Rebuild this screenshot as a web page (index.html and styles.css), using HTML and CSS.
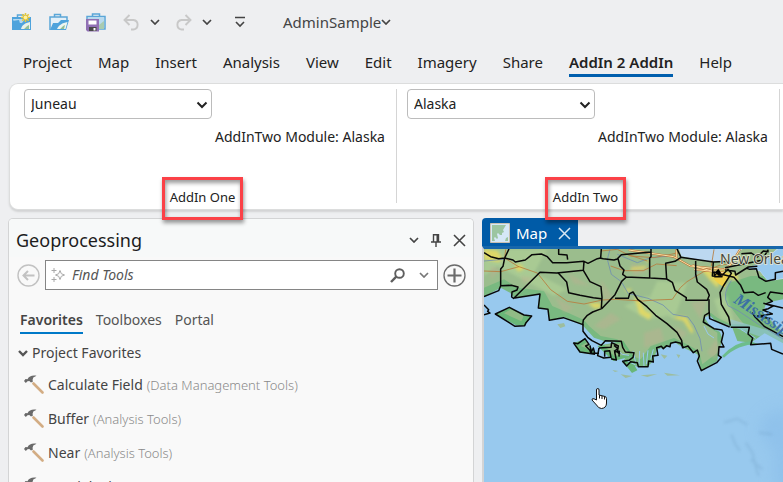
FILE: index.html
```html
<!DOCTYPE html>
<html lang="en">
<head>
<meta charset="utf-8">
<title>AdminSample</title>
<link rel="stylesheet" href="styles.css">
</head>
<body>
<svg class="defs" aria-hidden="true">
  <symbol id="chev" viewBox="0 0 10 6"><path d="M1 1l4 4 4-4" fill="none" stroke="currentColor" stroke-width="1.7"/></symbol>
  <symbol id="hammer" viewBox="0 0 20 20"><path d="M9.500 8.500l9 9" stroke="#d3ad84" stroke-width="2.600" stroke-linecap="round" fill="none"/><path d="M0 6l1.500-2 2 .2C5 1.500 8 0 12.500.8L9.300 2.600 8.500 5 9 6.500 7 7.500 5.300 6 3.500 6.300 1.800 8z" fill="#6a6a6a"/></symbol>
</svg>
<div class="app">
  <header class="quick">
    <button aria-label="New project"><svg width="20" height="18" viewBox="0 0 20 18"><path d="M5.500 4V2h6v2" fill="none" stroke="#5aa6d8" stroke-width="1.500"/><path d="M0 4h19v13H0z" fill="#4ea3dc"/><path d="M1 6h12l-3 4H2z" fill="#b5d9f0"/><path d="M0 8l7-1 3 10H0z" fill="#4ea3dc"/><path d="M9 16c1-4 4-6 9-7v7z" fill="#e8f2ea"/><path d="M12 16c2-1 2-3 5-4v4z" fill="#92bf96"/><path d="M13.500 0v9M9 4.500h9M10.300 1.300l6.400 6.400M16.700 1.300l-6.400 6.400" stroke="#e2c63f" stroke-width="1.600"/><circle cx="13.500" cy="4.500" r="2.300" fill="#fff2a0" stroke="#e2c63f"/></svg></button>
    <button aria-label="Open project"><svg width="20" height="18" viewBox="0 0 20 18"><path d="M5.500 4V1.500h6V4M1 17V4h17v5" fill="none" stroke="#5aa6d8" stroke-width="1.500"/><path d="M2 5h15v5H2z" fill="#e4f0f8"/><path d="M1 17L4 10h5l3-3h8l-3 10z" fill="#4ea3dc"/><path d="M8 16c2-4 5-6 10.500-7l-2 7z" fill="#eef5f0"/><path d="M11 16c2-1 2-3 5-4l-1 4z" fill="#92bf96"/></svg></button>
    <button aria-label="Save project"><svg width="20" height="19" viewBox="0 0 20 19"><path d="M6.500 3V1h7v2M1 6V3.500h18V16h-6" fill="none" stroke="#5aa6d8" stroke-width="1.500"/><path d="M2 4h16v12h-5V6H2z" fill="#b9daee"/><path d="M13 12l5-4v8h-5z" fill="#a9cbb0"/><path d="M0 6h13v12.500H1.500L0 17z" fill="#9070b4"/><path d="M2.500 7.500h8v4h-8z" fill="#fff"/><path d="M3 14h7.500v4H3z" fill="#484848"/><path d="M7.500 15h2v2.500h-2z" fill="#fff"/></svg></button>
    <button class="off" aria-label="Undo"><svg width="17" height="17" viewBox="0 0 17 17"><path d="M6.500 1L1.500 6l5 5M2 6h8.500a4.800 4.800 0 0 1 0 9.500H8" fill="none" stroke="currentColor" stroke-width="1.900"/></svg></button>
    <button aria-label="Undo list"><svg width="10" height="6"><use href="#chev"/></svg></button>
    <button class="off redo" aria-label="Redo"><svg width="17" height="17" viewBox="0 0 17 17"><path d="M10.500 1l5 5-5 5M15 6H6.500a4.800 4.800 0 0 0 0 9.500H9" fill="none" stroke="currentColor" stroke-width="1.900"/></svg></button>
    <button aria-label="Redo list"><svg width="10" height="6"><use href="#chev"/></svg></button>
    <button class="custom" aria-label="Customize"><svg width="10" height="12" viewBox="0 0 10 12"><path d="M0 1.500h10M1 6l4 4 4-4" fill="none" stroke="currentColor" stroke-width="1.600"/></svg></button>
    <button class="project">AdminSample<svg width="10" height="6"><use href="#chev"/></svg></button>
  </header>
  <nav class="tabs">
    <a href="#">Project</a><a href="#">Map</a><a href="#">Insert</a><a href="#">Analysis</a><a href="#">View</a><a href="#">Edit</a><a href="#">Imagery</a><a href="#">Share</a><a href="#" class="active">AddIn 2 AddIn</a><a href="#">Help</a>
  </nav>
  <section class="ribbon">
    <div class="group">
      <div class="picker"><select aria-label="City"><option>Juneau</option></select><svg width="12" height="8" viewBox="0 0 12 8"><path d="M1.500 1.500L6 6l4.500-4.500" fill="none" stroke="#222" stroke-width="2"/></svg></div>
      <span class="status">AddInTwo Module: Alaska</span>
      <span class="caption">AddIn One</span>
    </div>
    <div class="group">
      <div class="picker"><select aria-label="State"><option>Alaska</option></select><svg width="12" height="8" viewBox="0 0 12 8"><path d="M1.500 1.500L6 6l4.500-4.500" fill="none" stroke="#222" stroke-width="2"/></svg></div>
      <span class="status">AddInTwo Module: Alaska</span>
      <span class="caption">AddIn Two</span>
    </div>
  </section>
  <main class="work">
    <section class="pane">
      <div class="pane-head">
        <h1>Geoprocessing</h1>
        <button aria-label="Menu"><svg width="10" height="6"><use href="#chev"/></svg></button>
        <button aria-label="Pin"><svg width="10" height="13" viewBox="0 0 10 13"><path d="M2.500 8V.8h5V8M0 8h10M5 8v5" fill="none" stroke="currentColor" stroke-width="1.400"/><path d="M5.500 1h2v7h-2z" fill="currentColor"/></svg></button>
        <button aria-label="Close"><svg width="13" height="13" viewBox="0 0 13 13"><path d="M1 1l11 11M12 1L1 12" stroke="currentColor" stroke-width="1.600"/></svg></button>
      </div>
      <div class="finder">
        <button class="off" aria-label="Back"><svg width="23" height="23" viewBox="0 0 23 23" fill="none" stroke="currentColor"><circle cx="11.500" cy="11.500" r="10.500" stroke-width="1.400"/><path d="M17.500 11.500H6.500M11 7l-4.500 4.500L11 16" stroke-width="2"/></svg></button>
        <div class="field">
          <svg width="14" height="14" viewBox="0 0 14 14" fill="none" stroke="#a8a8a8"><path d="M9 2.500l1.300 3.200L13.500 7l-3.200 1.300L9 11.500 7.700 8.300 4.500 7l3.200-1.300z"/><path d="M3 0v5M.5 2.500h5M3 9v5M.5 11.500h5"/></svg>
          <input type="text" placeholder="Find Tools" aria-label="Find Tools">
          <button aria-label="Search"><svg width="15" height="15" viewBox="0 0 15 15" fill="none" stroke="#5e5e5e"><circle cx="9.500" cy="5.500" r="4.300" stroke-width="1.900"/><path d="M6.300 8.700L1 14" stroke-width="2.400"/></svg></button>
          <button class="more" aria-label="Search history"><svg width="10" height="6"><use href="#chev"/></svg></button>
        </div>
        <button aria-label="Add"><svg width="23" height="23" viewBox="0 0 23 23" fill="none" stroke="#6b6b6b"><circle cx="11.500" cy="11.500" r="10.500" stroke-width="1.300"/><path d="M11.500 4.500v14M4.500 11.500h14" stroke-width="2.200"/></svg></button>
      </div>
      <nav class="subtabs"><a href="#" class="active">Favorites</a><a href="#">Toolboxes</a><a href="#">Portal</a></nav>
      <h2><svg width="10" height="7" viewBox="0 0 10 7"><path d="M1 1l4 4 4-4" fill="none" stroke="#555" stroke-width="2.400"/></svg>Project Favorites</h2>
      <ul class="tools">
        <li><svg width="20" height="20"><use href="#hammer"/></svg>Calculate Field <small>(Data Management Tools)</small></li>
        <li><svg width="20" height="20"><use href="#hammer"/></svg>Buffer <small>(Analysis Tools)</small></li>
        <li><svg width="20" height="20"><use href="#hammer"/></svg>Near <small>(Analysis Tools)</small></li>
        <li><svg width="20" height="20"><use href="#hammer"/></svg>Spatial Join</li>
      </ul>
    </section>
    <section class="view">
      <div class="view-tab">
        <svg width="20" height="20" viewBox="0 0 20 20"><path d="M.5.500h19v19H.5z" fill="#d6e8f7" stroke="#c9c1b1"/><path d="M2 2h14l-3 5 1 2-2 1 0 2-2 0-2-2-1 1 1 4-1 1-2-2-1 1 1 3H2z" fill="#9cc5a1"/><path d="M15 18l1-3 2-1v4z" fill="#9cc5a1"/></svg>
        <span>Map</span>
        <button aria-label="Close map"><svg width="13" height="13" viewBox="0 0 13 13"><path d="M1 1l11 11M12 1L1 12" stroke="#d9e7f3" stroke-width="1.500"/></svg></button>
      </div>
      <div class="canvas">
        <svg class="map" viewBox="0 9 897 699" preserveAspectRatio="xMinYMin slice">
          <defs>
            <filter id="soft" x="-50%" y="-50%" width="200%" height="200%"><feGaussianBlur stdDeviation="5"/></filter>
            <filter id="wide" x="-50%" y="-50%" width="200%" height="200%"><feGaussianBlur stdDeviation="22"/></filter>
          </defs>
          <path d="M0 0H900V710H0z" fill="#98c9ee"/>
          <path d="M910 480c-80 30-110 60-60 110s0 60 30 140h60z" fill="#86bae8" opacity=".5" filter="url(#wide)"/>
          <g fill="none" stroke="#709fc4" stroke-width="7" opacity=".3" filter="url(#soft)"><path d="M720 530l40-12 30 18M742 565l12 30 14 20M785 590l20 30 18 70M825 560l40 5M800 640l35 30"/></g>
          <path d="M0 0H897V292L842 262 800 290 760 285 745 245 720 250 718 300 705 302 700 345 652 375 640 325 600 306 570 288 545 305 520 310 506 345 492 362 462 362 415 350 430 325 400 290 360 285 330 275 296 238 240 213 197 223 192 190 163 187 165 145 92 157 78 140 50 125 0 152z" fill="#79b980"/>
          <path d="M0 0H897V90L800 90 770 100 735 110 722 160 760 210 780 235 740 235 700 215 680 200 665 215 655 230 700 260 700 320 655 355 645 315 600 290 570 276 500 300 470 340 445 330 400 280 350 270 315 240 300 222 240 195 205 180 180 135 100 125 60 100 0 125z" fill="#9bbd8d"/>
          <g filter="url(#soft)" fill="#badb9b" opacity=".45"><path d="M0 10h190l-40 70 100 50-40 20L40 60 0 90zM520 105l90 5-40 110-80-50zM420 180l70-30 60 60-60 10zM690 160l40-10 20 80-40-10z"/></g>
          <g filter="url(#soft)" fill="#c0af92" opacity=".42"><path d="M330 240l50-40 30 20-50 30zM210 150l60 35-30 15zM440 50l60 20-50 20zM350 100l40 60-30 10zM570 240l40 20-20 20zM480 260l50-15 10 40-60 20zM250 80l70 40-50-7zM670 320l25-40 18 20-20 40zM620 170l50-10-20 60zM20 60l30 10-30 30zM110 90l40 5-30 20z"/></g>
          <path d="M585 9H775l-36 40-75-3-72-15zM788 66l40-12 50-45h19v90l-45 7-25-30z" fill="#bcd8f0"/>
          <path d="M897 96l-45 8-24-30-40-8 40-14 55-43h14z" fill="#98c9ee"/>
          <path d="M662 215l14-8 18 18 38 12 12 10 12 36-37 28-10-5 5-30-6-18-30-18z" fill="#98c9ee"/>
          <path d="M714 330q45-48 90-43l20 8q-60-2-104 40z" fill="#6dbd8c"/>
          <path d="M897 260V160l-50 10-10 30z" fill="#98c9ee"/>
          <path d="M740 240l0-20 100 30 57 10 0 35-45-15-57-20z" fill="#98c9ee" opacity=".5"/>
          <path d="M34 204l42-20 50 25 17 2-22 29-25-2zM270 291l33-12 32 46-48-5zM340 300l78-15 30 45-60 15zM415 345l30 2 15 26-16 8z" fill="#69b778"/>
          <path d="M60 202l20-12 40 18-8 18zM290 300l20-12 10 25zM360 296l50-4 30 34-50 4z" fill="#91bb86"/>
          <path d="M220 235l20-4 4 10-15 5zM410 385l35 5-20 6zM540 380l48 8-38 1zM470 388l50-4-30 9zM530 325l20 4-9 10zM577 325l12 2-5 10zM385 372l18 3-10 3z" fill="#9dbd9e"/>
          <g stroke="#98c9ee" stroke-width="3" fill="none"><path d="M455 350l-8-35M465 355l2-40M480 360l-2-40M487 355l5-42M500 340l8-30M520 325l12-20M660 240l12 24 18 12M690 225l6 28M770 250l45 27M845 174l30 30M395 310l20 15 20 3M430 345l25 12"/></g>
          <g fill="#e8da60" filter="url(#soft)" opacity=".85"><path d="M0 10l40 4 15 23-10 12L0 40zM90 62l16-8 16 13-18 10zM450 150l14 10 20 35 20 10-8 16-30-18zM310 172l38-2 5 14-20 4zM580 210l28 4 20 40-4 10-26-40-30-8zM650 65l60 5 50 15 5 20-50-15-15 35-20-20-25-30zM440 65l50-6-10 10-40 4zM485 40l12 4-6 8zM420 130l25-2-12 10z"/></g>
          <path d="M690 78l30-2 22 14-12 10-8 24-14-8-20-18z" fill="#efd04a"/>
          <g fill="none" stroke="#718fb0" stroke-width="2.500"><path d="M378 10l-8 30 12 45 30 22 20 35 60 15 45 20 30 28 45 8 18 25 18 40 6 38M742 104q-30 40-10 75l30 15 60 40 75 45M400 25l60 25 40-15 60-5M640 70l-10 25M0 45l60-5"/></g>
          <g fill="none" stroke="#b87b3c" stroke-width="2.500"><path d="M65 10l-3 26 40 25 58 20 40 50 50 35 50 8 55-12 40-2 80 5 40-3 50-2 24-35 20-18 50-30 50-20 45-4M0 75l50 2 55-15M380 60l40 14h58l40-20 60 5M350 15l50-5 40 20 70 5 75-15M690 10l-8 50M430 25l60 20"/></g>
          <g fill="none" stroke="#b86f37" stroke-width="6"><path d="M434 12l135 20 50 28 100 10 18-10 32-51M577 10v25M625 58l75 22M630 70l90 10"/></g>
          <g fill="none" stroke="#fae2a3" stroke-width="3"><path d="M434 12l135 20 50 28 100 10 18-10 32-51M577 10v25M625 58l75 22M630 70l90 10"/></g>
          <g class="bounds">
            <path d="M0 20l20 12 24 6 18-2 25 6 7 6 30-6 20-16 28-2 18 8 16 18h42L300 46l12 6 28-14 10-2 2-27M224 9v16l25 2 2 14M75 9L62 36l-5 25-7 8v50l32-1 20 5-3 9-15 6-1 15 7 5M50 119l-6 15L0 152M88 158l80-79 50 2 80-8 2-27M92 156l76-12-5 42 29 4 4 33 42-8 59 21v20l14 18 13 10 28 14 12-14 48 2 4 18 8 14 26 2L447 334l-12 9-19 3 12 14 12-13 20 3 3 12h29l2-17 14 3-2-18 16-2-4-23 14-4 6 7 10-9 10 3 2-10 15-4 15 4 8 13 14-5 16 20 12-8 6 18-6 15 12 29 46-24 14-16-9-6 2-26 15 1-8-15 6-26-4-10-24-4-32-20 4-20 14-8"/>
            <path d="M222 80l26 28 6 32 34 8 40 7 24 3M298 73l20 34 33 15 3 32-2 32M353 188l-27 10-16 10-12 14-2 16M353 188l40-42 20-40 14-13-11-8 4-13-12-12-6-22-12 4-32-4-11-2M400 38l12-12 90-8M393 157h40l4-14 10-5 14 22 28 22 26 26 34 25 30 26 14 24 3 24M425 93l72 3v-60l4-4V9M499 96l49 3-3-47 28-6 18-12-12-25M548 99l17 10 8 24 34 22-1 8h64l6-15-8-18-28-22-5-24V45M590 34l98 14-3 42 25 2 22-22 10 12-24 38-10 20 4 35 22 38 5 26M675 160v30l2 28 60 25M688 48l50-2M690 90l10-10-10-2 2 14 22 0-14-10 50 12 20 24 10 22 28-2 15 10 22-8M723 65l60-12 50-10 20-32M723 72l30 4 2 11 38-24 27-2M772 23l30-2 18 12 18-18 16 2M787 66l10 4 20-2 8 26 21 12 28-6v-20l23-4M897 143l-38-5-8 16 14 12-20 8 22 6-14 8-16 4 28 12-44 6 38 8M838 172l59 14M740 244h56l-4 20 14 12-6 20 60-4 3 18 34 14M897 272l-55-30-28-28-10-14"/>
            <path d="M0 177l14 14-3 5 7 5-18 5M34 204l42-20 44 23 23 3-17 20-4 9-29 2zM268 290l14 3 21-15 12 17-10 5 12 12 4 10h24M268 290l20 28 45 7M318 298l4 20 6-12 4 15M345 306l36-2 2-14 20 10-3 18 8 7M345 306l-4 23 18 7 22-2-4-20-15 2 0 16M381 338l16 4-5-24 14-2-1 16M390 298l12 10-12 8"/>
          </g>
          <path d="M695 77l8-9 8 12-8 10z"/>
          <g class="place"><text x="708" y="54" font-size="42">New Orleans</text></g>
          <text class="river" x="746" y="168" font-size="50" transform="rotate(33 746 168)">Mississippi</text>
        </svg>
        <svg class="hand" width="17" height="21" viewBox="0 0 17 21"><path d="M5.500 12V2q0-1.500 1.300-1.500T8 2v5l6 1.500q1.500.5 1.500 2V15q0 5-5 5.500-3 0-5-3.500L1 12q0-2 2-1.200z" fill="#fff" stroke="#111"/><path d="M8.500 7v3.500M11 8v3M13.500 8.500v3" stroke="#111"/></svg>
      </div>
    </section>
  </main>
</div>
</body>
</html>
```
FILE: styles.css
```css
* { box-sizing: border-box; }
body {
  margin: 0;
  background: #eeeff1;
  color: #222;
  font: 14px/20px "Noto Sans", "Open Sans", sans-serif;
}
button {
  display: flex;
  align-items: center;
  padding: 0;
  border: 0;
  background: none;
  color: #444;
  font: inherit;
}
a { color: inherit; text-decoration: none; }
svg { display: block; flex: none; }
.defs { position: absolute; width: 0; height: 0; }
.app {
  display: flex;
  flex-direction: column;
  height: 100vh;
  overflow: hidden;
}
.quick {
  display: flex;
  align-items: center;
  flex: none;
  height: 44px;
  padding-left: 12px;
  gap: 17px;
}
.quick .off { color: #c8c8c8; }
.quick .off + button { margin-left: -7px; }
.quick .redo { margin-left: -2px; }
.quick .custom { margin-left: 6px; }
.quick .project { margin-left: 21px; font-size: 15px; }
.tabs {
  display: flex;
  flex: none;
  gap: 26px;
  height: 39px;
  padding: 8px 0 0 23px;
  font-size: 15px;
}
.tabs a { height: 25px; white-space: nowrap; }
.tabs .active { font-weight: 600; border-bottom: 3px solid #005fae; }
.ribbon {
  display: flex;
  flex: none;
  height: 127px;
  margin-left: 9px;
  padding: 5px 0 6px 4px;
  border: 1px solid #dcdddd;
  border-right: 0;
  border-radius: 9px 0 0 9px;
  background: #fff;
  box-shadow: 0 2px 2px #d2d3d4;
}
.group {
  display: grid;
  grid-template-columns: 188px auto;
  grid-template-rows: 30px 36px 1fr;
  column-gap: 3px;
  padding: 0 11px 0 10px;
  border-right: 1px solid #d5d5d5;
}
.picker { position: relative; }
.picker select {
  width: 100%;
  height: 30px;
  padding: 0 24px 0 6px;
  border: 1px solid #bcbcbc;
  border-radius: 4px;
  background: #fff;
  color: #222;
  font: inherit;
  appearance: none;
}
.picker svg { position: absolute; right: 4px; top: 12px; pointer-events: none; }
.status { grid-column: 2; grid-row: 2; align-self: center; white-space: nowrap; }
.caption {
  position: relative;
  grid-column: 1 / 3;
  align-self: end;
  justify-self: center;
  margin-right: 4px;
  font-size: 13px;
  line-height: 12px;
}
.caption::after {
  content: "";
  position: absolute;
  inset: -14px -8px -17px;
  border: 3px solid #fb4147;
  box-shadow: 1px 3px 4px #0006, inset 1px 3px 4px #0006;
}
.work {
  display: flex;
  flex: 1;
  gap: 8px;
  min-height: 0;
  padding: 8px 0 0 8px;
}
.pane {
  flex: 0 0 466px;
  overflow: hidden;
  border: 1px solid #d3d4d5;
  border-bottom: 0;
  border-radius: 5px 5px 0 0;
  background: #f9f9f9;
  color: #444;
}
.pane-head {
  display: flex;
  align-items: center;
  gap: 12px;
  height: 38px;
  padding: 4px 7px 0;
  background: #f7f9f9;
}
.pane-head h1 { flex: 1; margin: 0; color: #1d1d1d; font-size: 18px; font-weight: 400; line-height: 28px; }
.finder { display: flex; align-items: center; gap: 5px; padding: 3px 7px 0 8px; }
.finder .off { color: #c2c2c2; }
.field {
  display: flex;
  align-items: center;
  flex: 1;
  height: 30px;
  padding: 0 8px 0 5px;
  border: 1px solid #858585;
  background: #fff;
}
.field input {
  flex: 1;
  min-width: 0;
  padding: 0 7px;
  border: 0;
  background: none;
  font: inherit;
  font-style: italic;
}
.field input::placeholder { color: #555; opacity: 1; }
.field .more { margin-left: 14px; color: #777; }
.subtabs { display: flex; gap: 13px; padding: 20px 11px 0; color: #555; }
.subtabs a { height: 24px; }
.subtabs .active { border-bottom: 2px solid #0079c8; color: #444; font-weight: 600; }
.pane h2 { display: flex; align-items: center; gap: 4px; margin: 9px 0 5px 9px; font-size: 14px; font-weight: 400; }
.tools { margin: 0; padding: 0 0 0 15px; list-style: none; }
.tools li { display: flex; align-items: center; gap: 4px; height: 34px; white-space: nowrap; }
.tools small { color: #8a8a8a; font-size: 13px; font-weight: 300; }
.view { display: flex; flex: 1; flex-direction: column; min-width: 0; }
.view-tab {
  display: flex;
  align-items: center;
  align-self: flex-start;
  gap: 6px;
  height: 28px;
  padding: 2px 7px 0 8px;
  border-radius: 4px 0 0 0;
  background: #005ba7;
  color: #fff;
  font-size: 15px;
}
.view-tab button { margin-left: 5px; }
.canvas {
  position: relative;
  flex: 1;
  min-height: 0;
  overflow: hidden;
  border-top: 3px solid #1767ab;
  border-left: 2px solid #d3d4d5;
}
.map { width: 100%; height: 100%; }
.bounds { fill: none; stroke: #080808; stroke-width: 4.500; stroke-linejoin: round; }
.place { fill: #45473f; stroke: #e3e5d2; stroke-width: 5; paint-order: stroke; }
.river { fill: #3b70a5; font-family: "Liberation Serif", serif; font-style: italic; font-weight: 700; }
.hand { position: absolute; left: 107px; top: 139px; }
```
